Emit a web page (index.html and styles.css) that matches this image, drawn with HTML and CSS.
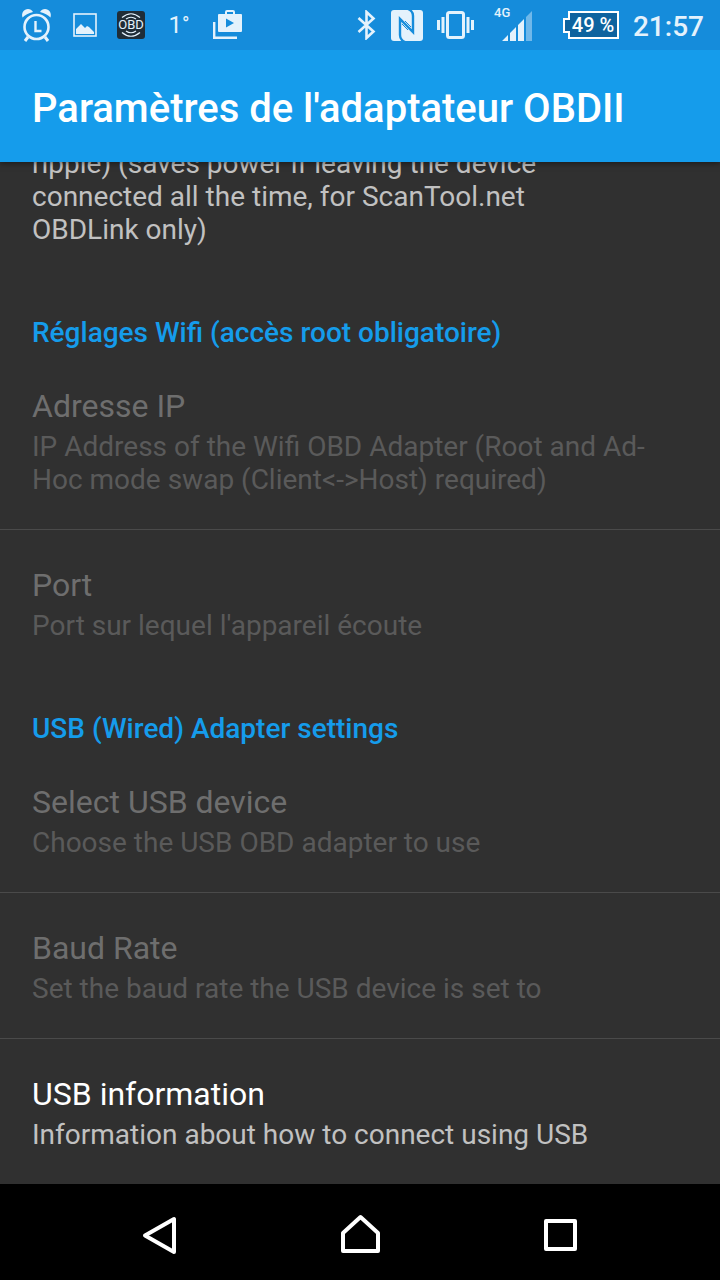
FILE: index.html
```
<!DOCTYPE html>
<html lang="fr">
<head>
  <meta charset="UTF-8" />
  <meta name="viewport" content="width=device-width, initial-scale=1.0" />
  <title>Paramètres de l'adaptateur OBDII</title>
  <link rel="stylesheet" href="styles.css">
</head>
<body>
  <div class="screen">
    <div class="status-bar">
      <div class="notifications">
        <svg width="32" height="34" viewBox="0 0 32 34" fill="none" stroke="currentColor">
          <circle cx="15.500" cy="19" r="12" stroke-width="2.600" />
          <path d="M14.500 13v10h6" stroke-width="2.400" />
          <path d="M7 29l-3 4M24 29l3 4" stroke-width="3" />
          <path d="M1.500 9.500C0 5 3 1 7 1c2 0 4 1 5 3C7.500 5 4 7 1.500 9.500zM29.500 9.500C31 5 28 1 24 1c-2 0-4 1-5 3 4.500 1 8 3 10.500 5.500z" fill="currentColor" stroke="none" />
        </svg>
        <svg width="24" height="24" viewBox="0 0 24 24">
          <rect x="1" y="1" width="22" height="22" fill="none" stroke="currentColor" stroke-width="1.600" />
          <path d="M3 21v-5l5-5 4 4 2-2 2 1 5 5v2z" fill="currentColor" />
        </svg>
        <svg class="obd" width="28" height="28" viewBox="0 0 28 28">
          <rect width="28" height="28" rx="3" fill="#1f2d37" />
          <g fill="none" stroke="currentColor" stroke-width="1.200">
            <path d="M5 6.500Q14-1 23 6.500M9 8Q14 4.500 19 8M5 21.500Q14 29 23 21.500M9 20Q14 23.500 19 20" />
          </g>
          <text x="14" y="18" text-anchor="middle">OBD</text>
        </svg>
        <span class="temperature">1<small>°</small></span>
        <svg width="30" height="30" viewBox="0 0 30 30">
          <path d="M1.200 12v15.800H24" fill="none" stroke="currentColor" stroke-width="2.400" />
          <path d="M12 4V2q0-2 2-2h6q2 0 2 2v2h6q1 0 1 1v16q0 1-1 1H6q-1 0-1-1V5q0-1 1-1zM14 4h6V2h-6zM13 8.500v9l8-4.500z" fill="currentColor" fill-rule="evenodd" />
        </svg>
      </div>

      <div class="system">
        <svg width="20" height="30" viewBox="0 0 20 30" fill="none" stroke="currentColor" stroke-width="2.600">
          <path d="M1.500 8l15 13.500-7 6.500V2l7 6.500L1.500 22" />
        </svg>
        <svg width="32" height="31" viewBox="0 0 32 31">
          <rect width="32" height="31" rx="3" fill="currentColor" />
          <path d="M14 32Q9 30 9 25V9l13 13V6q0-5-5-7" fill="none" stroke="#158cdb" stroke-width="2.400" />
          <path d="M11 14l6 6M14 11l6 6" fill="none" stroke="#158cdb" stroke-width="1" />
        </svg>
        <svg width="37" height="28" viewBox="0 0 37 28">
          <rect x="10.500" y="1.500" width="16" height="25" rx="2" fill="none" stroke="currentColor" stroke-width="3" />
          <path d="M0 9h3v10H0zM4.500 6h3v16h-3zM29.500 6h3v16h-3zM34 9h3v10h-3z" fill="currentColor" />
        </svg>
        <svg class="signal" width="39" height="42" viewBox="0 0 39 42">
          <text x="0" y="13">4G</text>
          <path d="M8 37l6-6v6zM16 29l6-6v14h-6zM24 21l6-6v22h-6z" fill="currentColor" />
          <path d="M32 13l6-6v30h-6z" fill="#6fb8ea" />
        </svg>
        <svg class="battery" width="56" height="28" viewBox="0 0 56 28">
          <path d="M6 1h49v26H6v-6H1V8h5z" fill="#0e639f" stroke="#fff" stroke-width="2" />
          <text x="30" y="21" text-anchor="middle">49 %</text>
        </svg>
        <span class="clock">21:57</span>
      </div>
    </div>

    <header class="app-bar">
      <h1>Paramètres de l'adaptateur OBDII</h1>
    </header>

    <main class="settings">
      <button class="setting with-widget">
        <span class="summary">ripple) (saves power if leaving the device connected all the time, for ScanTool.net OBDLink only)</span>
      </button>

      <h2>Réglages Wifi (accès root obligatoire)</h2>
      <button class="setting" disabled>
        <span class="title">Adresse IP</span>
        <span class="summary">IP Address of the Wifi OBD Adapter (Root and Ad-Hoc mode swap (Client&lt;-&gt;Host) required)</span>
      </button>
      <button class="setting divided" disabled>
        <span class="title">Port</span>
        <span class="summary">Port sur lequel l'appareil écoute</span>
      </button>

      <h2>USB (Wired) Adapter settings</h2>
      <button class="setting" disabled>
        <span class="title">Select USB device</span>
        <span class="summary">Choose the USB OBD adapter to use</span>
      </button>
      <button class="setting divided" disabled>
        <span class="title">Baud Rate</span>
        <span class="summary">Set the baud rate the USB device is set to</span>
      </button>
      <button class="setting divided">
        <span class="title">USB information</span>
        <span class="summary">Information about how to connect using USB</span>
      </button>
    </main>

    <nav class="nav-bar">
      <button aria-label="Retour">
        <svg width="40" height="40" viewBox="0 0 40 40"><path d="M5 21.500L34 5v33z" /></svg>
      </button>
      <button aria-label="Accueil">
        <svg width="40" height="40" viewBox="0 0 40 40"><path d="M3 19L20.500 3 38 19v18H3z" /></svg>
      </button>
      <button aria-label="Applications récentes">
        <svg width="40" height="40" viewBox="0 0 40 40"><path d="M6 7h29v28H6z" /></svg>
      </button>
    </nav>
  </div>
</body>
</html>
```
FILE: styles.css
```
:root {
  --primary: #159ceb;
  --status: #158cdb;
  --bg: #303030;
  --divider: #4a4a4a;
}

* {
  box-sizing: border-box;
}

body {
  margin: 0;
  font-family: Roboto, sans-serif;
  background: var(--bg);
  color: #fff;
}

svg {
  display: block;
}

button {
  border: none;
  background: none;
  font: inherit;
  color: inherit;
}

.screen {
  display: flex;
  flex-direction: column;
  height: 100vh;
}

.status-bar {
  flex: none;
  display: flex;
  justify-content: space-between;
  align-items: center;
  height: 50px;
  padding: 0 16px 0 21px;
  background: var(--status);
  color: #e4f2fc;
  position: relative;
  z-index: 2;
}

.notifications, .system {
  display: flex;
  align-items: center;
}

.notifications {
  gap: 20px;
}

.system {
  gap: 14px;
}

.obd text {
  font-size: 13px;
  fill: currentColor;
}

.temperature {
  display: flex;
  width: 28px;
  justify-content: center;
  font-size: 24px;
  line-height: 30px;
}

.temperature small {
  font-size: 20px;
  line-height: 28px;
}

.signal text {
  font-size: 13px;
  font-weight: 500;
  fill: currentColor;
}

.signal {
  margin-left: 6px;
}

.battery {
  margin-left: 16px;
}

.battery text {
  font-size: 20px;
  font-weight: 500;
  fill: #fff;
}

.clock {
  padding-top: 2px;
  font-size: 28px;
  font-weight: 500;
}

.app-bar {
  flex: none;
  display: flex;
  align-items: center;
  height: 112px;
  padding: 4px 32px 0;
  background: var(--primary);
  box-shadow: 0 1px 6px rgba(0, 0, 0, 0.5);
  z-index: 1;
}

h1 {
  margin: 0;
  font-size: 40px;
  font-weight: 500;
}

/* list is scrolled to its end, the first rows run under the app bar */
.settings {
  flex: 1;
  min-height: 0;
  display: flex;
  flex-direction: column;
  justify-content: flex-end;
  overflow: hidden;
}

.settings > * {
  flex: none;
}

h2 {
  margin: 0;
  padding: 37px 32px 2px;
  font-size: 28px;
  line-height: 33px;
  font-weight: 500;
  color: var(--primary);
}

.setting {
  display: flex;
  flex-direction: column;
  gap: 4px;
  padding: 35px 32px 33px;
  text-align: left;
}

.divided {
  border-top: 1px solid var(--divider);
}

.with-widget {
  padding-right: 96px;
}

.title {
  font-size: 32px;
  line-height: 40px;
}

.summary {
  font-size: 28px;
  line-height: 33px;
  color: #c1c1c1;
}

.setting:disabled .title {
  color: #6e6e6e;
}

.setting:disabled .summary {
  color: #5a5a5a;
}

.nav-bar {
  flex: none;
  display: flex;
  justify-content: center;
  height: 96px;
  padding-top: 4px;
  background: #000;
}

.nav-bar button {
  display: flex;
  flex: 0 1 200px;
  align-items: center;
  justify-content: center;
}

.nav-bar path {
  fill: none;
  stroke: #fff;
  stroke-width: 4;
  stroke-linejoin: round;
}
```
